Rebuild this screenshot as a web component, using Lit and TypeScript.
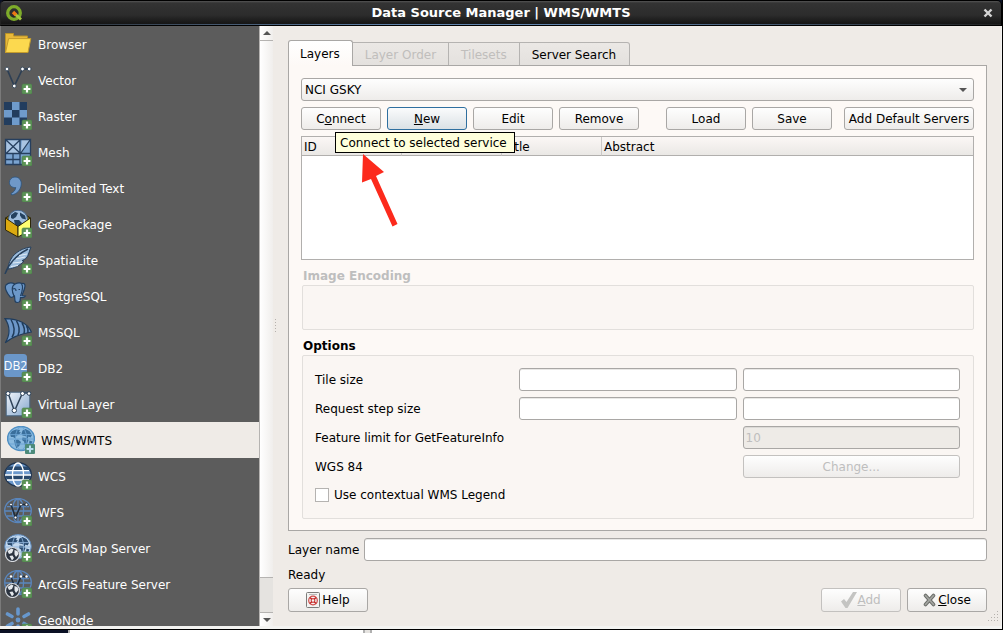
import { LitElement, html, css, svg } from "lit";
import { customElement, property, state } from "lit/decorators.js";
import { classMap } from "lit/directives/class-map.js";

const plus = svg`
  <rect x="18" y="18" width="10" height="10" rx="1.5" fill="#5c9356" stroke="#4c7f49" stroke-width=".6"/>
  <path d="M23 19.6v6.8M19.6 23h6.8" stroke="#fff" stroke-width="2.2"/>`;

const land = svg`
  <path d="M3 8l2-3 4-1.500 4 .5-1 2 2 .5-2.500 2.500-2 .5-1 3-2.500-1.500L4 11zM15.500 4.500l3-1.500 4 2 2.500 4-1.500 2.500-2-1-1 2.500-2-3-3-.5-1-2zM7 14l4-.5 3 2.500-1.500 3.500-3 3-1.500-4zM15.500 11.500l4 .5 2 2-2 5-1.500.5-1-4-2-1.500zM22.500 14.500l3 1-1.500 3-2-1z"/>`;

const meridians = svg`
  <ellipse cx="14" cy="12.5" rx="5.6" ry="11.5"/>
  <path d="M3 8.600h22M1 13h26M3 18h22"/>`;

const arcgis = svg`
  <circle cx="8.500" cy="20.500" r="7" fill="#2c3440" stroke="#d8dbdf" stroke-width="1.200"/>
  <path d="M3.500 17l4-2.500 2 1-1.500 3.500-3 1zM10.500 16l3 1 1 3-2.500 3-1.500-2.500zM5.500 22l3-.5 1.500 2.500-2 2.500z" fill="#e4e8ec"/>`;

const icons: Record<string, unknown> = {
  folder: svg`
    <path d="M1.500 23V3.500h8V6h14v5" fill="#e8b93a" stroke="#b99227"/>
    <path d="M1.500 22.500L4.600 8.600h22.200L24 22.500z" fill="#fcd94f" stroke="#c49c2c"/>`,
  vector: svg`
    <path d="M3 3l7.300 17L18.500 3H25" fill="none" stroke="#2d3f54" stroke-width="1.700"/>
    <g fill="#fff" stroke="#39495a" stroke-width="1"><circle cx="3" cy="3" r="1.900"/><circle cx="10.300" cy="20" r="1.900"/><circle cx="18.500" cy="3" r="1.900"/><circle cx="25.200" cy="3" r="1.900"/></g>${plus}`,
  raster: svg`
    <rect width="23" height="23" fill="#6f9bcb"/>
    <path d="M0 0h8v8H0zM15.500 0H23v8h-7.500zM8 8h7.500v7.500H8zM0 15.500h8V23H0zM15.500 15.500H23V23h-7.500z" fill="#223d5e"/>${plus}`,
  mesh: svg`
    <rect x="1.500" y="1.500" width="25" height="25" fill="#7aa3d0"/>
    <path d="M2 2h13v13H2zM18 2h8l-9 13z" fill="#a9c4e2"/>
    <path d="M1.500 1.500h25v25h-25zM16 1.500v25M1.500 15.500h25M1.500 21.500h15M9 15.500v11M2 2l14 13M16 2L2 15.500M26 2L16.500 15.500" fill="none" stroke="#263f5e" stroke-width="1.300"/>${plus}`,
  comma: svg`
    <path d="M11 3c4 0 6.500 3 6.300 7-.3 6-4.500 10-9.500 11l-.8-1.500c3-1.500 4.500-3.500 4.700-6C8.500 14 5.400 11.800 5.400 8.500 5.400 5.300 7.800 3 11 3z" fill="#6f98c8" stroke="#2f567f" stroke-width=".9"/>${plus}`,
  geopackage: svg`
    <path d="M1.500 8L8 4h12l6.500 4L14 17z" fill="#8a6b08" stroke="#2e2708"/>
    <circle cx="14" cy="9.800" r="9.600" fill="#9fbddd" stroke="#466890"/>
    <path d="M7 5l4-3 3 1-2 4-3 2-2-1zM16 2.500l5 3 1 4-4-1-2-3zM10 10l5 0 3 3-3 5-4-3z" fill="#24415f"/>
    <path d="M1.500 8L14 16.500V27L1.500 20z" fill="#dcaa10" stroke="#2e2708"/>
    <path d="M26.500 8L14 16.500V27l12.500-7z" fill="#ffff72" stroke="#2e2708"/>${plus}`,
  feather: svg`
    <path d="M27 1C19 2 11 6 7 13c-2 3.500-3 7-3 10 6-.5 12-3.500 16-8l-2-.3 4-2.200C25 9 25 5 27 1z" fill="#9dbddd" stroke="#27405c"/>
    <path d="M1 28C4 19 12 9 24 3" fill="none" stroke="#27405c" stroke-width="1.500"/>
    <path d="M9 17l9-1M12 13l9-2M15 9.500l8-1.500M7 20.500l7-1" stroke="#dfeaf5"/>${plus}`,
  elephant: svg`
    <path d="M2 3c3-3 7-2 9-1 3-1.500 6-1 7-.5 3-.5 3.500 1.500 2.500 5-.7 3-2 5-2.500 7 1.500.5 2.500 0 3.500.5-1 1.500-3 2-5 1.500L16 19c-1 2-4.500 2-5 0l-.5-5c-1.500 1-3 2-4.200 1C3.500 12 0 6 2 3z" fill="#6c98c9" stroke="#223f60" stroke-width="1.200"/>
    <path d="M11 2C7 4 8 10 10 14M17.500 2c2 2 .5 8-1 12M9 7c2-1 3 0 3 2M14.500 7.500h1.500" fill="none" stroke="#223f60" stroke-width="1.200"/>${plus}`,
  sail: svg`
    <path d="M1 0.600C15 1 24 6 27.400 14 18 15.500 8 19 1.200 24.800 6 17 6 8 1 .6z" fill="#6d97c8" stroke="#203c5b" stroke-width="1.200"/>
    <path d="M7 1.500c4 7 4 13 1 18M12.500 2.800c3.500 6 3.500 10 1.500 14.500M18 5c2.500 4 3 7 2 10.500M22.500 8c1.500 2 2 4 1.500 7" fill="none" stroke="#203c5b" stroke-width="1.500"/>${plus}`,
  db2: svg`
    <rect width="23" height="23" rx="3.500" fill="#6b97c9"/>
    <text x="11.500" y="16" text-anchor="middle" font-family="Open Sans, Noto Sans, sans-serif" font-size="12" fill="#fff">DB2</text>${plus}`,
  virtual: svg`
    <defs><linearGradient id="vl" x2="1" y2="1"><stop stop-color="#f1f5fa"/><stop offset="1" stop-color="#83a6cd"/></linearGradient></defs>
    <rect x="2.200" y="2.200" width="23.600" height="23.600" fill="url(#vl)" stroke="#48647f"/>
    <path d="M4 3l6.500 18L18.500 3H26" fill="none" stroke="#2d4259" stroke-width="1.500"/>
    <g fill="#fff" stroke="#2d4259"><circle cx="4" cy="3.500" r="2"/><circle cx="10.300" cy="20.500" r="2.200"/><circle cx="18.500" cy="3.500" r="2"/><circle cx="25" cy="3.500" r="1.800"/></g>${plus}`,
  wms: svg`
    <ellipse cx="14" cy="12.500" rx="13.400" ry="12" fill="#8bbbe0" stroke="#4f8fc3" stroke-width="1.500"/>
    <g fill="#3a6f9c">${land}</g>
    <g fill="none" stroke="#6aa3d2" stroke-width=".9">${meridians}</g>
    <rect x="18" y="18" width="10" height="10" rx="1" fill="#4d8b7b"/><path d="M23 19.600v6.800M19.600 23h6.800" stroke="#b9dff0" stroke-width="2"/>`,
  wcs: svg`
    <ellipse cx="14" cy="12.500" rx="13.300" ry="11.800" fill="#6c98cb" stroke="#223650" stroke-width="1.400"/>
    <path d="M4 4.500h20l2 4H2zM1 13h26l-2 5H3z" fill="#28486c"/>
    <g fill="none" stroke="#fff" stroke-width="1.300">${meridians}</g>${plus}`,
  wfs: svg`
    <g fill="none" stroke="#5a86bd" stroke-width="1.300"><ellipse cx="14" cy="12.500" rx="13.300" ry="12"/>${meridians}<path d="M14 1v23"/></g>
    <path d="M7 6.500l4.500 13L17 6.500h5.500" fill="none" stroke="#202d3d" stroke-width="1.600"/>
    <g fill="#fff" stroke="#202d3d" stroke-width=".8"><circle cx="7" cy="6.500" r="1.400"/><circle cx="11.500" cy="19.500" r="1.500"/><circle cx="17" cy="6.500" r="1.400"/><circle cx="22.500" cy="6.500" r="1.400"/></g>${plus}`,
  arcmap: svg`
    <ellipse cx="14" cy="12.500" rx="13.300" ry="12" fill="#c2d8ee" stroke="#5c87b9"/>
    <g fill="#2b4c70">${land}</g>
    <g fill="none" stroke="#8fb3d9" stroke-width=".9">${meridians}</g>${arcgis}${plus}`,
  arcfeature: svg`
    <g fill="none" stroke="#5a86bd" stroke-width="1.300"><ellipse cx="14" cy="12.500" rx="13.300" ry="12"/>${meridians}<path d="M14 1v23"/></g>
    <path d="M7 6.500l4.500 13L17 6.500h5.500" fill="none" stroke="#202d3d" stroke-width="1.600"/>
    <g fill="#fff"><circle cx="7" cy="6.500" r="1.200"/><circle cx="17" cy="6.500" r="1.200"/><circle cx="22.500" cy="6.500" r="1.200"/></g>${arcgis}${plus}`,
  geonode: svg`
    <g stroke="#6797cc" stroke-width="3.600" stroke-linecap="round"><path d="M14 3v5M14 20v5M3.500 8l4.500 2.500M24.500 8L20 10.500M3.500 20l4.500-2.500M20 17.500l4.500 2.500"/></g>
    <circle cx="14" cy="14" r="2.400" fill="#6797cc"/>${plus}`,
};

const sources = [
  ["folder", "Browser"],
  ["vector", "Vector"],
  ["raster", "Raster"],
  ["mesh", "Mesh"],
  ["comma", "Delimited Text"],
  ["geopackage", "GeoPackage"],
  ["feather", "SpatiaLite"],
  ["elephant", "PostgreSQL"],
  ["sail", "MSSQL"],
  ["db2", "DB2"],
  ["virtual", "Virtual Layer"],
  ["wms", "WMS/WMTS"],
  ["wcs", "WCS"],
  ["wfs", "WFS"],
  ["arcmap", "ArcGIS Map Server"],
  ["arcfeature", "ArcGIS Feature Server"],
  ["geonode", "GeoNode"],
];

const controls = css`
  * {
    box-sizing: border-box;
  }
  button,
  input,
  select {
    font: inherit;
    color: inherit;
    margin: 0;
  }
  .btn {
    display: inline-flex;
    align-items: center;
    justify-content: center;
    height: 23px;
    min-width: 80px;
    padding: 0 3px;
    border: 1px solid #a9a7a5;
    border-radius: 3px;
    background: linear-gradient(#fefefe, #eeecea);
    white-space: nowrap;
  }
  .btn:disabled {
    color: #bebebe;
    border-color: #c3c1bf;
  }
  .btn.focused {
    border-color: #2f6f9f;
    background: linear-gradient(#fafbfc, #dbe1e5);
  }
  .field {
    width: 100%;
    min-width: 0;
    height: 23px;
    padding: 0 2px;
    border: 1px solid #a9a7a5;
    border-radius: 3px;
    background: #fff;
    box-shadow: inset 0 1px 0 #e9e8e6;
  }
  .field:disabled {
    color: #bebebe;
    background: #eeebe7;
    box-shadow: inset 0 1px 0 #dcdad7;
  }
`;

@customElement("source-list")
class SourceList extends LitElement {
  @state() private selected = "WMS/WMTS";

  static styles = [
    controls,
    css`
      :host {
        display: flex;
        min-height: 0;
      }
      .list {
        flex: 1;
        overflow: hidden;
        background: #5c5c5c;
        color: #fff;
      }
      .item {
        display: flex;
        align-items: center;
        gap: 6px;
        width: 100%;
        height: 36px;
        padding: 0 3px;
        border: 0;
        background: none;
        text-align: left;
      }
      .item.selected {
        padding-left: 6px;
        background: #efebe7;
        color: #000;
      }
      .label {
        padding-top: 1px;
      }
      .icon {
        flex: none;
        width: 28px;
        height: 28px;
      }
      .scroll {
        flex: none;
        display: flex;
        flex-direction: column;
        width: 14px;
        border-left: 1px solid #b5b3b1;
        background: #e5e3e0;
      }
      .step {
        display: flex;
        align-items: center;
        justify-content: center;
        height: 14px;
        padding: 0;
        border: 0;
        background: linear-gradient(90deg, #fff, #f0eeec);
      }
      .thumb {
        flex: 1;
        margin-bottom: 34px;
        border: solid #b5b3b1;
        border-width: 1px 0;
        background: linear-gradient(90deg, #fff, #f0eeec);
      }
      .down {
        border-top: 1px solid #b5b3b1;
      }
    `,
  ];

  render() {
    return html`
      <nav class="list">
        ${sources.map(
          ([icon, label]) => html`<button
            class=${classMap({ item: true, selected: this.selected === label })}
            @click=${() => (this.selected = label)}
          >
            <svg class="icon" viewBox="0 0 28 28">${icons[icon]}</svg><span class="label">${label}</span>
          </button>`
        )}
      </nav>
      <div class="scroll">
        <button class="step" aria-label="Scroll up">
          <svg width="8" height="4"><path d="M0 4l4-4 4 4z" fill="#555" /></svg>
        </button>
        <div class="thumb"></div>
        <button class="step down" aria-label="Scroll down">
          <svg width="8" height="4"><path d="M0 0h8L4 4z" fill="#555" /></svg>
        </button>
      </div>
    `;
  }
}

@customElement("layers-page")
class LayersPage extends LitElement {
  static styles = [
    controls,
    css`
      :host {
        display: flex;
        flex-direction: column;
        padding: 12px 12px 11px;
      }
      .combo {
        display: grid;
        align-items: center;
      }
      .combo > * {
        grid-area: 1 / 1;
      }
      .combo select {
        appearance: none;
        height: 23px;
        padding: 0 3px;
        border: 1px solid #a9a7a5;
        border-radius: 3px;
        background: linear-gradient(#fefefe, #eeecea);
      }
      .combo svg {
        justify-self: end;
        margin-right: 7px;
        pointer-events: none;
      }
      .actions {
        display: flex;
        gap: 6px;
        margin: 6px 0;
      }
      .spacer {
        flex: 1;
      }
      .wide {
        min-width: 130px;
        margin-left: 6px;
      }
      .anchor {
        position: relative;
        display: flex;
      }
      .tooltip {
        position: absolute;
        z-index: 1;
        left: 34px;
        top: 25px;
        padding: 3px 7px 1px 4px;
        border: 1px solid #000;
        background: #ffffdc;
        line-height: 15px;
        white-space: nowrap;
      }
      .arrow {
        position: absolute;
        z-index: 1;
        left: 59px;
        top: 47px;
        pointer-events: none;
      }
      .results {
        flex: 1;
        min-height: 60px;
        border: 1px solid #b1afad;
        background: #fff;
      }
      table {
        width: 100%;
        table-layout: fixed;
        border-spacing: 0;
      }
      .narrow {
        width: 100px;
      }
      th {
        height: 19px;
        padding: 1px 2px 0;
        border-bottom: 1px solid #b1afad;
        border-right: 1px solid #cbc9c7;
        background: linear-gradient(#fbf7f5, #eae8e5);
        font-weight: normal;
        line-height: 16px;
        text-align: left;
      }
      th:last-child {
        border-right: 0;
      }
      .title {
        margin: 0;
        padding: 8px 2px 1px;
        font-size: 12px;
        font-weight: bold;
        line-height: 16px;
      }
      .dim {
        color: #bebebe;
      }
      .group {
        margin-left: 1px;
        border: 1px solid #e2dfdc;
        border-radius: 2px;
        background: #faf6f3;
      }
      .encoding {
        height: 45px;
      }
      .options {
        display: grid;
        grid-template-columns: 198px 1fr 1fr;
        gap: 6px;
        align-items: center;
        padding: 12px 13px 13px 12px;
      }
      .last {
        grid-column: 3;
      }
      .across {
        grid-column: span 2;
      }
      .check {
        grid-column: 1 / -1;
        display: flex;
        align-items: center;
        gap: 5px;
        height: 21px;
      }
      .check input {
        appearance: none;
        width: 14px;
        height: 14px;
        border: 1px solid #b5b3b1;
        background: #fff;
      }
    `,
  ];

  render() {
    return html`
      <div class="combo">
        <select aria-label="Connection">
          <option>NCI GSKY</option>
        </select>
        <svg width="8" height="4"><path d="M0 0h8L4 4z" fill="#555" /></svg>
      </div>
      <div class="actions">
        <div class="anchor">
          <button class="btn" aria-describedby="hint">C<u>o</u>nnect</button>
          <div class="tooltip" id="hint" role="tooltip">Connect to selected service</div>
          <svg class="arrow" width="40" height="76">
            <path d="M3 0l21 18-8 4 21.500 48-5 2.500L11 25l-9 3.500z" fill="#fc2a1c" />
          </svg>
        </div>
        <button class="btn focused"><span><u>N</u>ew</span></button>
        <button class="btn">Edit</button>
        <button class="btn">Remove</button>
        <span class="spacer"></span>
        <button class="btn">Load</button>
        <button class="btn">Save</button>
        <button class="btn wide">Add Default Servers</button>
      </div>
      <div class="results">
        <table>
          <colgroup>
            <col class="narrow" /><col class="narrow" /><col class="narrow" /><col />
          </colgroup>
          <thead>
            <tr>
              <th>ID</th>
              <th>Name</th>
              <th>Title</th>
              <th>Abstract</th>
            </tr>
          </thead>
        </table>
      </div>
      <h2 class="title dim">Image Encoding</h2>
      <div class="group encoding"></div>
      <h2 class="title">Options</h2>
      <div class="group options">
        <label for="tile-w">Tile size</label>
        <input class="field" id="tile-w" />
        <input class="field" aria-label="Tile height" />
        <label for="step-w">Request step size</label>
        <input class="field" id="step-w" />
        <input class="field" aria-label="Step height" />
        <label class="across" for="limit">Feature limit for GetFeatureInfo</label>
        <input class="field last" id="limit" value="10" disabled />
        <span class="across">WGS 84</span>
        <button class="btn last" disabled>Change...</button>
        <label class="check"><input type="checkbox" />Use contextual WMS Legend</label>
      </div>
    `;
  }
}

@customElement("app-root")
class AppRoot extends LitElement {
  @property() heading = "Data Source Manager | WMS/WMTS";

  static styles = [
    controls,
    css`
      :host {
        display: flex;
        flex-direction: column;
        height: 100vh;
        overflow: hidden;
        background: #0a1024;
        color: #000;
        font: 12px/16px "DejaVu Sans", sans-serif;
      }
      .window {
        flex: 1;
        min-height: 0;
        display: flex;
        flex-direction: column;
        border: solid #000;
        border-width: 0 1px 1px 0;
      }
      .titlebar {
        display: grid;
        grid-template-columns: 26px 1fr 26px;
        align-items: center;
        justify-items: center;
        height: 26px;
        border: 1px solid #000;
        border-left-color: #222;
        border-radius: 5px 5px 0 0;
        background: linear-gradient(#555 0, #333 2px, #2c2c2c 14px, #171717 22px, #171717 23px, transparent 23px),
          linear-gradient(90deg, #222, #6184ad 40%, #6184ad 60%, #222);
        color: #fff;
      }
      .titlebar h1 {
        margin: 0;
        font-size: 13px;
        line-height: 16px;
      }
      .close {
        display: flex;
        padding: 4px;
        border: 0;
        background: none;
      }
      .body {
        flex: 1;
        min-height: 0;
        display: flex;
        background: #efebe7;
        border: solid #f3f3f1;
        border-width: 0 1px 3px 0;
      }
      .sources {
        flex: none;
        width: 273px;
        border-left: 1px solid #7a7a7a;
      }
      .splitter {
        flex: none;
        display: flex;
        align-items: center;
        width: 15px;
        padding-left: 2px;
      }
      .main {
        flex: 1;
        min-width: 0;
        display: flex;
        flex-direction: column;
        padding: 14px 14px 0 0;
      }
      .tabs {
        display: flex;
        align-items: flex-end;
      }
      .tab {
        height: 24px;
        margin-bottom: -1px;
        padding: 1px 12px 0;
        border: 1px solid #b5b3b1;
        border-left: 0;
        background: linear-gradient(#ebe8e5, #e4e1de);
      }
      .tab:last-child {
        padding: 1px 13px 0 12px;
        border-radius: 0 3px 0 0;
      }
      .tab:disabled {
        color: #c0bebc;
      }
      .tab.current {
        height: 26px;
        padding: 0 12px 0 11px;
        border: 1px solid #a9a7a5;
        border-bottom: 0;
        border-radius: 3px 3px 0 0;
        background: linear-gradient(#fff, #fdf9f6);
        z-index: 1;
      }
      .panel {
        flex: 1;
        min-height: 0;
        border: 1px solid #a9a7a5;
        background: #fdf9f6;
      }
      .name {
        display: flex;
        align-items: center;
        gap: 5px;
        margin-top: 7px;
      }
      .name label {
        flex: none;
      }
      .status {
        margin: 6px 0 5px;
      }
      .footer {
        display: flex;
        gap: 6px;
      }
      .footer .btn {
        height: 24px;
      }
      .help {
        margin-right: auto;
        gap: 2px;
      }
      .grip {
        align-self: flex-end;
        margin: -1px -11px 5px 0;
      }
      .desktop {
        flex: none;
        display: flex;
        height: 3px;
        gap: 2px;
        background: #b0b0b0;
      }
      .wallpaper {
        width: 68px;
        background: #0a1024;
      }
      .pane {
        width: 293px;
        background: #fff;
      }
      .bar {
        width: 5px;
        background: #e5e3e0;
      }
      .rest {
        flex: 1;
        background: #fff;
      }
    `,
  ];

  private dots() {
    const spots: [number, number][] = [];
    for (let r = 0; r < 4; r++) for (let c = 3 - r; c < 4; c++) spots.push([c * 3, r * 3]);
    return spots.map(([x, y]) => svg`<rect x=${x} y=${y} width="1" height="1" fill="#b5b1ad"/>`);
  }

  render() {
    return html`
      <div class="window">
        <header class="titlebar">
          <svg width="18" height="18" viewBox="0 0 18 18">
            <circle cx="9" cy="9" r="6.300" fill="none" stroke="#7eac2a" stroke-width="3.300" />
            <path d="M10 10l6 5.500" stroke="#a5c93c" stroke-width="3" />
            <path d="M8 8l3 3" stroke="#ee7913" stroke-width="3.400" />
          </svg>
          <h1>${this.heading}</h1>
          <button class="close" aria-label="Close window">
            <svg width="10" height="10">
              <path d="M1.500 1.500l7 7M8.500 1.500l-7 7" stroke="#d6d6d6" stroke-width="2.400" />
            </svg>
          </button>
        </header>
        <div class="body">
          <source-list class="sources"></source-list>
          <div class="splitter">
            <svg width="3" height="14">
              ${[0, 3, 6, 9, 12].map((y) => svg`<rect x="0" y=${y} width="1" height="1" fill="#b5b1ad"/>`)}
            </svg>
          </div>
          <main class="main">
            <div class="tabs" role="tablist">
              <button class="tab current" role="tab" aria-selected="true">Layers</button>
              <button class="tab" role="tab" disabled>Layer Order</button>
              <button class="tab" role="tab" disabled>Tilesets</button>
              <button class="tab" role="tab">Server Search</button>
            </div>
            <layers-page class="panel"></layers-page>
            <div class="name">
              <label for="layer-name">Layer name</label>
              <input class="field" id="layer-name" />
            </div>
            <div class="status" role="status">Ready</div>
            <div class="footer">
              <button class="btn help">
                <svg width="14" height="16">
                  <rect x=".5" y=".5" width="13" height="15" rx="1" fill="#f3f3f2" stroke="#7c7c7a" />
                  <path d="M3 2.500h8" stroke="#bbb" />
                  <circle cx="7" cy="8.500" r="4.300" fill="none" stroke="#cf4a48" stroke-width="1.200" />
                  <circle cx="7" cy="8.500" r="1.800" fill="none" stroke="#cf4a48" stroke-width="1.200" />
                  <path d="M4 5.500l1.800 1.800M10 5.500L8.200 7.300M4 11.500l1.800-1.800M10 11.500L8.200 9.700" stroke="#c62828" stroke-width="1.600" />
                </svg>
                Help
              </button>
              <button class="btn" disabled>
                <svg width="16" height="16">
                  <path d="M0 9.500l3-2.500 2.500 3L12 0h4L6.500 16H4.500z" fill="#c4c4c2" />
                </svg>
                <span><u>A</u>dd</span>
              </button>
              <button class="btn">
                <svg width="15" height="14">
                  <path d="M2.500 2.500l8 9M10.500 2.500l-8 9" stroke="#6d6f6b" stroke-width="3.600" stroke-linecap="round" />
                  <path d="M2.500 2.500l8 9M10.500 2.500l-8 9" stroke="#a4a6a2" stroke-width="1.600" stroke-linecap="round" />
                </svg>
                <span><u>C</u>lose</span>
              </button>
            </div>
            <svg class="grip" width="10" height="10">${this.dots()}</svg>
          </main>
        </div>
      </div>
      <div class="desktop">
        <span class="wallpaper"></span><span class="pane"></span><span class="bar"></span><span class="rest"></span>
      </div>
    `;
  }
}
